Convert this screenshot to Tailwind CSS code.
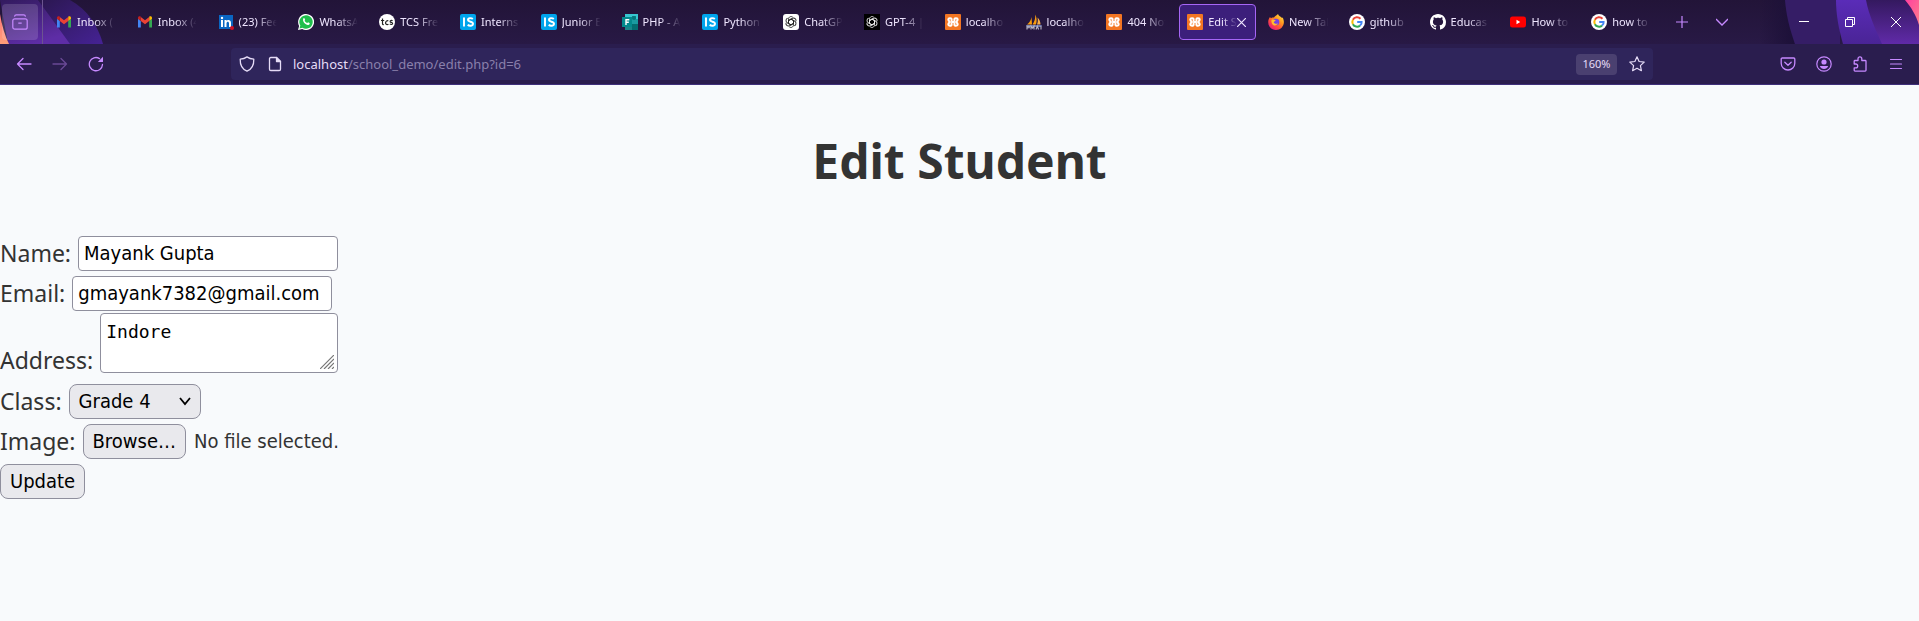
<!DOCTYPE html>
<html lang="en">
<head>
<meta charset="utf-8">
<title>Edit Student</title>
<script src="https://cdn.jsdelivr.net/npm/@tailwindcss/browser@4"></script>
</head>
<body class="min-h-screen bg-[#f8fafc] font-['Noto_Sans',sans-serif] text-[#333]">

<svg class="absolute size-0" aria-hidden="true">
  <symbol id="gmail" viewBox="0 0 16 16"><path fill="#4285f4" d="M1 13.5h2.8V7L1 4.8z"/><path fill="#34a853" d="M12.2 13.5H15V4.8L12.2 7z"/><path fill="#fbbc04" d="M12.2 3.3V7L15 4.8V4c0-1.6-1.6-2.2-2.8-1.2z"/><path fill="#ea4335" d="M3.8 7V3L8 6.200l4.200-3.200V7L8 10.200z"/><path fill="#c5221f" d="M1 4v.8L3.800 7V2.800C2.600 1.900 1 2.400 1 4z"/></symbol>
  <symbol id="linkedin" viewBox="0 0 16 16"><rect x="1" y="1" width="14" height="14" fill="#0a66c2"/><path fill="#fff" d="M3 6h2v7H3zM6.500 6h2v1c.9-1.600 4.500-1.700 4.500 1.700V13h-2V9.300c0-2.200-2.500-2-2.500 0V13h-2z"/><circle cx="4" cy="4" r="1.200" fill="#fff"/><circle cx="14" cy="14" r="2" fill="#d11124"/></symbol>
  <symbol id="whatsapp" viewBox="0 0 16 16"><path fill="#fff" d="M0 16l1.100-4.100A8 8 0 1 1 4.200 15z"/><path fill="#1fbf4c" d="M1.500 14.500l.8-3A6.700 6.700 0 1 1 4.500 13.700z"/><path fill="#fff" d="M5.500 4.200c.5-.4.9-.2 1.100.3l.5 1.200c.1.400-.5.900-.6 1.100.5 1 1.400 1.800 2.500 2.300.3 0 .8-1 1.100-.9l1.400.7c.5.3 0 1.500-.6 1.800-2.500 1.200-7.400-3.300-5.400-6.500z"/></symbol>
  <symbol id="tcs" viewBox="0 0 16 16"><circle cx="8" cy="8" r="8" fill="#fff"/><g fill="none" stroke="#222" stroke-width="1.200"><path d="M3.500 4.500v5c0 1 .6 1.200 1.300 1M2 6.500h3.200M9.300 7c-2.500-1.500-4 3.500-1.200 3.600.6 0 1-.2 1.300-.5M13.600 6.800c-1.200-.8-2.700-.1-2.400.9.300.9 2.400.6 2.400 1.800 0 1.200-1.800 1.200-2.800.6"/></g></symbol>
  <symbol id="is" viewBox="0 0 16 16"><rect width="16" height="16" rx="2" fill="#00a5ec"/><path fill="none" stroke="#fff" stroke-width="1.900" d="M4 3.500v9M12.800 5c-1.300-1.200-4.800-1.200-4.800.8 0 2.600 5 1.300 5 4 0 2.300-3.700 2.500-5.300 1"/></symbol>
  <symbol id="forms" viewBox="0 0 16 16"><path fill="#37c6d0" d="M3 0h13v9H3z"/><path fill="#1a8489" d="M10 2h4v4h-4zM3 7h7v9H3z"/><path fill="#036c70" d="M10 10h6v6h-6z"/><path fill="#1a9ba1" d="M10 5h6v5h-6z"/><circle cx="12" cy="4" r="2" fill="#03787c"/><rect y="3" width="10" height="10" fill="#03898d"/><path fill="none" stroke="#fff" stroke-width="1.400" d="M4 11V5.700h3.300M4 8.300h2.800"/></symbol>
  <symbol id="knot" viewBox="0 0 16 16"><g fill="none" stroke="currentColor" stroke-width=".9"><path id="pt" d="M8 5.200l2.500 1.400v4.200c0 2.600-3 3.400-4.300 1.900"/><use href="#pt" transform="rotate(60 8 8)"/><use href="#pt" transform="rotate(120 8 8)"/><use href="#pt" transform="rotate(180 8 8)"/><use href="#pt" transform="rotate(240 8 8)"/><use href="#pt" transform="rotate(300 8 8)"/></g></symbol>
  <symbol id="gptw" viewBox="0 0 16 16"><rect width="16" height="16" rx="3" fill="#fff"/><use href="#knot" width="16" height="16" color="#222"/></symbol>
  <symbol id="gptb" viewBox="0 0 16 16"><rect width="16" height="16" fill="#000"/><use href="#knot" width="16" height="16" color="#eee"/></symbol>
  <symbol id="xampp" viewBox="0 0 16 16"><rect width="16" height="16" rx="1" fill="#f37623"/><path fill="none" stroke="#fff" stroke-width="2" stroke-linejoin="round" stroke-linecap="round" d="M6.600 6.500V5.200c0-1.300-3.300-1.300-3.300.3 0 1.200.9 1.700 1.600 2.500-.7.800-1.600 1.300-1.600 2.500 0 1.600 3.300 1.600 3.300.3V9.500M9.400 6.500V5.200c0-1.300 3.300-1.300 3.300.3 0 1.200-.9 1.700-1.600 2.500.7.800 1.600 1.300 1.600 2.500 0 1.600-3.300 1.600-3.300.3V9.500M7 8h2"/></symbol>
  <symbol id="pma" viewBox="0 0 16 16"><path fill="#f89c0e" d="M1 10.500C3.500 8.500 5 6 5.500 3L6 10.500z"/><path fill="#f89c0e" d="M6.500 10.500C8.500 7.500 9.500 4.500 9.200.5c1.800 3 1.800 7 .8 10z"/><path fill="#f8b04c" d="M11 10.500C12 8 12 6 11.500 3.500c2 2 3 4.500 3 7z"/><path fill="#6c78af" d="M0 11h16l-1 2H1z"/><path fill="none" stroke="#b9b6c4" stroke-width="1.100" d="M1 15.500v-3.300h2.200v1.600H1M5 15.500v-3.300l1.500 2 1.500-2v3.300M10 15.500l1.300-3.300 1.300 3.300M15 12v3.500"/></symbol>
  <symbol id="firefox" viewBox="0 0 16 16"><defs><linearGradient id="ff" x1="1" y1="0" x2=".2" y2="1"><stop offset="0" stop-color="#fff44f"/><stop offset=".4" stop-color="#ff9a1f"/><stop offset=".7" stop-color="#ff4a3d"/><stop offset="1" stop-color="#e31587"/></linearGradient></defs><path fill="url(#ff)" d="M2 3c.3.700.600 1 1 1.200C4 3.500 5 3.500 6 3.500 7 2 8.500 1.500 10 0c.3 2 3 2.500 4 4l.6-.6c1.800 3 1.900 7.500-1 10.300-3.500 3.300-9.300 2.800-12-.9C-.3 9.800-.3 6 2 3z"/><circle cx="8" cy="8" r="3.300" fill="#7542e5"/><path fill="#ffbd2e" d="M3.600 5.700C5 5 6.500 5.500 7.700 6.600c-.3.900-1.700.7-2 1.700.6 1.500 2.300 2 4.300 1-1 2.500-4.200 2.800-5.600.9-.9-1.300-1.200-3-.8-4.500z"/></symbol>
  <symbol id="google" viewBox="0 0 16 16"><circle cx="8" cy="8" r="8" fill="#fff"/><g fill="none" stroke-width="2"><path stroke="#ea4335" d="M11.500 4.800A4.700 4.700 0 0 0 3.900 5.800"/><path stroke="#fbbc05" d="M3.900 5.800a4.700 4.700 0 0 0 0 4.400"/><path stroke="#34a853" d="M3.900 10.200a4.700 4.700 0 0 0 7.100 1.400"/><path stroke="#4285f4" d="M11 11.600C12.200 10.600 12.800 9.400 12.600 8H8.200"/></g></symbol>
  <symbol id="github" viewBox="0 0 16 16"><path fill="#fff" d="M8 0C3.580 0 0 3.580 0 8c0 3.540 2.290 6.530 5.470 7.590.4.070.55-.17.55-.38 0-.19-.01-.82-.01-1.490-2.010.37-2.530-.49-2.690-.94-.09-.23-.48-.94-.82-1.130-.28-.15-.68-.52-.01-.53.63-.01 1.080.58 1.230.82.720 1.210 1.870.87 2.330.66.070-.52.280-.87.510-1.070-1.780-.2-3.640-.89-3.640-3.950 0-.87.310-1.590.82-2.150-.08-.2-.36-1.020.08-2.120 0 0 .67-.21 2.200.82.640-.18 1.320-.27 2-.27s1.360.09 2 .27c1.530-1.040 2.200-.82 2.200-.82.440 1.100.160 1.920.08 2.120.51.560.82 1.270.82 2.150 0 3.070-1.870 3.750-3.650 3.950.29.25.54.73.54 1.480 0 1.070-.01 1.930-.01 2.200 0 .21.150.46.550.38A8.010 8.010 0 0 0 16 8c0-4.420-3.580-8-8-8z"/></symbol>
  <symbol id="youtube" viewBox="0 0 16 16"><rect y="2.500" width="16" height="11" rx="2.500" fill="#f00"/><path fill="#fff" d="M6.500 5.800v4.400L10.200 8z"/></symbol>
</svg>

<header class="bg-[#2a1d4e]">
  <div class="relative flex h-11 items-center overflow-hidden bg-linear-to-b from-[#221438] to-[#281945]">
    <svg class="absolute left-0 top-0 h-11 w-[130px]" viewBox="0 0 130 44" aria-hidden="true">
      <defs>
        <linearGradient id="l1" x1="0" y1="0" x2=".5" y2="1"><stop offset="0" stop-color="#321a5e"/><stop offset="1" stop-color="#5e2da6"/></linearGradient>
        <linearGradient id="l2" x1="0" y1="0" x2="1" y2="1"><stop offset="0" stop-color="#2b1750"/><stop offset="1" stop-color="#452294"/></linearGradient>
        <linearGradient id="l3" x1="0" y1="0" x2="0" y2="1"><stop offset="0" stop-color="#ff7a7a"/><stop offset="1" stop-color="#ff9d77"/></linearGradient>
      </defs>
      <path fill="url(#l2)" d="M38 0H70C88 10 98 26 103 44H60z"/>
      <path fill="url(#l1)" d="M0 0H38L70 44H8z"/>
      <path fill="url(#l3)" d="M0 14C2 26 5 36 9 44H0z"/>
    </svg>
    <svg class="absolute right-0 top-0 h-11 w-[159px]" viewBox="0 0 159 44" aria-hidden="true">
      <defs>
        <linearGradient id="r0" x1="0" y1="0" x2="1" y2="0"><stop offset="0" stop-color="#1c1038" stop-opacity="0"/><stop offset="1" stop-color="#1c1038"/></linearGradient>
        <linearGradient id="r1" x1="0" y1="0" x2="0" y2="1"><stop offset="0" stop-color="#5a2cb8"/><stop offset="1" stop-color="#4a2496"/></linearGradient>
        <linearGradient id="r2" x1="0" y1="0" x2="0" y2="1"><stop offset="0" stop-color="#34195f"/><stop offset="1" stop-color="#602aa8"/></linearGradient>
        <linearGradient id="r3" x1="0" y1="0" x2="1" y2="1"><stop offset="0" stop-color="#ff3f9f"/><stop offset="1" stop-color="#ff7d8c"/></linearGradient>
      </defs>
      <path fill="url(#r0)" d="M0 0H25L35 44H0z"/>
      <path fill="#351d66" d="M25 0H80V44H35C30 30 26 15 25 0z"/>
      <path fill="url(#r1)" d="M76 0H110L124 44H83C79 30 76 15 76 0z"/>
      <path fill="url(#r2)" d="M106 0H159V44H122C116 30 109 16 106 0z"/>
      <path fill="url(#r3)" d="M145 0H159V25C156 15 151 7 145 0z"/>
    </svg>

    <div class="relative flex h-11 w-[43px] shrink-0 items-center border-r border-[#6c5490] pl-[2px]">
      <button class="flex size-9 items-center justify-center rounded bg-white/15 text-[#c689ff]" aria-label="Firefox View">
        <svg class="size-4" viewBox="0 0 16 16" fill="none" stroke="currentColor" stroke-width="1.200"><path d="M2.500 2.600C2.700 1.300 3.300.8 4.300.8h7.400c1 0 1.600.5 1.800 1.800M6.300 9.200h3.400"/><rect x=".8" y="4.800" width="14.400" height="10.400" rx="2"/></svg>
      </button>
    </div>
    <div class="relative mr-[39px] ml-[3px] flex min-w-0 flex-1 items-center">
      <nav id="tabs" class="grid flex-1 grid-cols-20" aria-label="Tabs"></nav>
      <button class="flex h-9 w-10 shrink-0 items-center justify-center text-[#c689ff]" aria-label="New tab"><svg class="size-3" viewBox="0 0 12 12" stroke="currentColor" stroke-width="1.200"><path d="M0 6h12M6 0v12"/></svg></button>
      <button class="flex h-9 w-10 shrink-0 items-center justify-center text-[#c689ff]" aria-label="List all tabs"><svg class="size-3" viewBox="0 0 12 12" fill="none" stroke="currentColor" stroke-width="1.300"><path d="M0 3l6 6 6-6"/></svg></button>
    </div>
    <div class="relative flex shrink-0 text-white">
      <button class="flex h-11 w-[46px] items-center justify-center" aria-label="Minimize"><svg class="size-3" viewBox="0 0 12 12" stroke="currentColor"><path d="M1 5.500h10"/></svg></button>
      <button class="flex h-11 w-[46px] items-center justify-center" aria-label="Restore"><svg class="size-3" viewBox="0 0 12 12" fill="none" stroke="currentColor"><path d="M1.500 3.500h7v7h-7zM3.500 3.500v-2h7v7h-2"/></svg></button>
      <button class="flex h-11 w-[46px] items-center justify-center" aria-label="Close window"><svg class="size-3" viewBox="0 0 12 12" stroke="currentColor"><path d="M1 1l10 10M11 1L1 11"/></svg></button>
    </div>
  </div>

  <div class="flex h-[41px] items-center border-b border-[#3f2f7a] pr-[5px] pl-[6px] text-[#c689ff]">
    <div class="flex">
      <button class="flex h-8 w-9 items-center justify-center" aria-label="Back"><svg class="size-4" viewBox="0 0 16 16" fill="none" stroke="currentColor" stroke-width="1.300" stroke-linecap="round" stroke-linejoin="round"><path d="M15 8H1.500M7 2.500L1.500 8 7 13.500"/></svg></button>
      <button class="flex h-8 w-9 items-center justify-center opacity-40" aria-label="Forward"><svg class="size-4" viewBox="0 0 16 16" fill="none" stroke="currentColor" stroke-width="1.300" stroke-linecap="round" stroke-linejoin="round"><path d="M1 8h13.500M9 2.500L14.500 8 9 13.500"/></svg></button>
      <button class="flex h-8 w-9 items-center justify-center" aria-label="Reload"><svg class="size-4" viewBox="0 0 16 16" fill="none" stroke="currentColor" stroke-width="1.300" stroke-linecap="round"><path d="M14.500 8.500A6.600 6.600 0 1 1 11.500 2.600"/><path fill="currentColor" stroke="none" d="M15 .8v5.200H9.800z"/></svg></button>
    </div>
    <div class="mx-[117px] flex h-8 flex-1 items-center rounded bg-[#2f255b] px-2 text-[#e6dcf7]">
      <svg class="size-4 shrink-0" viewBox="0 0 16 16" fill="none" stroke="currentColor" stroke-width="1.300" stroke-linejoin="round"><path d="M8 .9C6 2.300 3.500 3 1.200 3.200 1 9 3 13 8 15.200 13 13 15 9 14.800 3.200 12.500 3 10 2.300 8 .9z"/></svg>
      <svg class="ml-3 size-4 shrink-0" viewBox="0 0 16 16" fill="none" stroke="currentColor" stroke-width="1.300" stroke-linejoin="round"><path d="M9.500 1.500H3.800c-.8 0-1.300.5-1.300 1.300v10.400c0 .8.500 1.300 1.300 1.300h8.400c.8 0 1.300-.5 1.300-1.300V5.500z"/><path fill="currentColor" d="M9.500 1.500v4h4z"/></svg>
      <div class="ml-[10px] flex-1 pt-px text-[13px]">localhost<span class="text-[#8a80ab]">/school_demo/edit.php?id=6</span></div>
      <button class="h-[21px] w-[41px] rounded-sm bg-[#4a4070] text-[11px]" aria-label="Reset zoom level">160%</button>
      <button class="ml-3 flex size-4 items-center justify-center" aria-label="Bookmark this page"><svg class="size-4" viewBox="0 0 16 16" fill="none" stroke="currentColor" stroke-width="1.200" stroke-linejoin="round"><path d="M8 .8l2.100 4.700 5.100.6-3.800 3.500 1 5.100L8 12.200l-4.400 2.500 1-5.100L.8 6.100l5.100-.6z"/></svg></button>
    </div>
    <div class="flex">
      <button class="flex h-8 w-9 items-center justify-center" aria-label="Save to Pocket"><svg class="size-4" viewBox="0 0 16 16" fill="none" stroke="currentColor" stroke-width="1.300" stroke-linecap="round" stroke-linejoin="round"><path d="M2.300 2h11.400c.7 0 1.100.4 1.100 1.100v4.100a6.800 6.800 0 0 1-13.600 0V3.100c0-.7.4-1.100 1.100-1.100zM4.800 6.300L8 9.300l3.200-3"/></svg></button>
      <button class="flex h-8 w-9 items-center justify-center" aria-label="Account"><svg class="size-4" viewBox="0 0 16 16"><circle cx="8" cy="8" r="7.200" fill="none" stroke="currentColor" stroke-width="1.200"/><circle cx="8" cy="6" r="2.600" fill="currentColor"/><path fill="currentColor" d="M3.800 10h8.400c-.6 1.900-2.300 2.900-4.200 2.900S4.400 11.900 3.800 10z"/></svg></button>
      <button class="flex h-8 w-9 items-center justify-center" aria-label="Extensions"><svg class="size-4" viewBox="0 0 16 16" fill="none" stroke="currentColor" stroke-width="1.300" stroke-linejoin="round"><path d="M2.200 8V5.300c0-.5.300-.8.800-.8h3V2.800a1.900 1.900 0 0 1 3.800 0v1.700h3.400c.5 0 .8.300.8.800v9c0 .5-.3.800-.8.800H3c-.5 0-.8-.3-.8-.8v-2.500h1.600a1.900 1.900 0 0 0 0-3.800z"/></svg></button>
      <button class="flex h-8 w-9 items-center justify-center" aria-label="Menu"><svg class="size-4" viewBox="0 0 16 16" fill="none" stroke="currentColor" stroke-width="1.200" stroke-linecap="round"><path d="M2.500 3.500h11M2.500 8h11M2.500 12.500h11"/></svg></button>
    </div>
  </div>
</header>

<main>
  <h1 class="pt-11 pb-10 text-center text-5xl leading-[64px] font-bold">Edit Student</h1>
  <form class="text-[23px]" onsubmit="return false">
    <div class="flex h-10 items-center gap-[7px]">
      <label for="name">Name:</label>
      <input id="name" type="text" value="Mayank Gupta" class="h-[35px] w-[260px] rounded border border-[#8f8f9d] bg-white px-[5px] font-['DejaVu_Sans_Condensed',sans-serif] text-xl text-black">
    </div>
    <div class="flex h-10 items-center gap-[7px]">
      <label for="email">Email:</label>
      <input id="email" type="text" value="gmayank7382@gmail.com" class="h-[35px] w-[260px] rounded border border-[#8f8f9d] bg-white px-[5px] font-['DejaVu_Sans_Condensed',sans-serif] text-xl text-black">
    </div>
    <div class="flex items-end gap-[7px] pb-2">
      <label for="address" class="leading-[26px]">Address:</label>
      <div class="relative">
        <textarea id="address" class="block h-[60px] w-[238px] resize-none rounded border border-[#8f8f9d] bg-white px-[5px] py-[5px] font-['DejaVu_Sans_Mono',monospace] text-lg leading-[25px] text-black">Indore</textarea>
        <svg class="absolute right-1 bottom-1 size-[14px]" viewBox="0 0 14 14" stroke="#777" stroke-width="1.200" aria-hidden="true"><path d="M0 14L14 0M4 14L14 4M8 14l6-6M12 14l2-2"/></svg>
      </div>
    </div>
    <div class="flex h-10 items-center gap-[7px]">
      <label for="class">Class:</label>
      <div class="relative flex items-center">
        <select id="class" class="h-[35px] w-[132px] appearance-none rounded-lg border border-[#8f8f9d] bg-[#e9e9ed] px-[9px] font-['DejaVu_Sans_Condensed',sans-serif] text-xl text-black"><option>Grade 4</option></select>
        <svg class="pointer-events-none absolute right-[10px] size-3" viewBox="0 0 12 12" fill="none" stroke="#000" stroke-width="1.800" aria-hidden="true"><path d="M1 3l5 6 5-6"/></svg>
      </div>
    </div>
    <div class="flex h-10 items-center gap-[7px]">
      <label for="image">Image:</label>
      <div class="relative flex items-center gap-2 font-['DejaVu_Sans_Condensed',sans-serif] text-xl">
        <input id="image" type="file" class="sr-only">
        <label for="image" class="flex h-[35px] items-center rounded-lg border border-[#8f8f9d] bg-[#e9e9ed] px-[9px] text-black">Browse…</label>
        <span>No file selected.</span>
      </div>
    </div>
    <div class="flex h-10 items-center">
      <button type="submit" class="h-[35px] rounded-lg border border-[#8f8f9d] bg-[#e9e9ed] px-[9px] font-['DejaVu_Sans_Condensed',sans-serif] text-xl text-black">Update</button>
    </div>
  </form>
</main>

<script>
const tabs = [
  ["gmail", "Inbox ("], ["gmail", "Inbox (4"], ["linkedin", "(23) Fee"], ["whatsapp", "WhatsA"],
  ["tcs", "TCS Fre"], ["is", "Interns"], ["is", "Junior E"], ["forms", "PHP - A"], ["is", "Python"],
  ["gptw", "ChatGP"], ["gptb", "GPT-4 |"], ["xampp", "localho"], ["pma", "localho"], ["xampp", "404 Not"],
  ["xampp", "Edit S"], ["firefox", "New Tab"], ["google", "github"], ["github", "Educas"], ["youtube", "How to"],
  ["google", "how to"]
];
const icon = id => `<svg class="size-4 shrink-0" viewBox="0 0 16 16" aria-hidden="true"><use href="#${id}"/></svg>`;
document.getElementById("tabs").innerHTML = tabs.map(([id, text], i) => i === 14
  ? `<div class="px-[2px]"><div class="flex h-9 items-center rounded border border-[#a666f5] bg-[#3c1f7b] pr-[10px] pl-[7px] text-[11px] text-[#efe6ff]">${icon(id)}<span class="ml-[5px] flex-1 mask-r-from-50% whitespace-nowrap">${text}</span><button class="flex shrink-0 justify-center" aria-label="Close tab"><svg class="size-[9px]" viewBox="0 0 9 9" stroke="currentColor" stroke-width="1.200"><path d="M0 0l9 9M9 0L0 9"/></svg></button></div></div>`
  : `<a href="#" class="flex h-9 items-center pr-[7px] pl-[10px] text-[11px] text-[#efe6ff]">${icon(id)}<span class="ml-[5px] flex-1 mask-r-from-40% mask-r-to-90% whitespace-nowrap">${text}</span></a>`
).join("");
</script>
</body>
</html>
